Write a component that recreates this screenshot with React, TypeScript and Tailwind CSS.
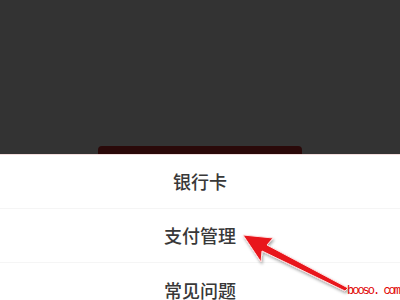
export default function App() {
  const items = ["银行卡", "支付管理", "常见问题"];

  return (
    <div className="relative w-[400px] h-[300px] overflow-hidden bg-[#333333] flex flex-col font-['Noto_Sans_CJK_SC',sans-serif]">
      <div className="h-[146px] shrink-0" />
      {/* button peeking out behind the sheet */}
      <div className="mx-auto w-[204px] h-[8px] shrink-0 rounded-t-[4px] bg-[#2a0909]" />
      <div className="flex-1 bg-white border-t border-[#f3dede]">
        {items.map((label, i) => (
          <div
            key={label}
            className={`h-[54px] flex items-center justify-center text-[18px] font-medium text-[#383838] ${
              i < items.length - 1 ? "border-b border-[#f5f5f5]" : ""
            }`}
          >
            {label}
          </div>
        ))}
      </div>

      {/* annotation arrow */}
      <svg className="absolute left-0 top-0" width="400" height="300" viewBox="0 0 400 300">
        <defs>
          <filter id="sh" x="-20%" y="-20%" width="140%" height="140%">
            <feDropShadow dx="1" dy="2" stdDeviation="1.5" floodColor="#000" floodOpacity="0.35" />
          </filter>
        </defs>
        <polygon
          points="243,235 273,238 267,245 348,288 345,291 262,251 261,262"
          fill="#e8131a"
          stroke="#ffe0e0"
          strokeWidth="1"
          strokeLinejoin="round"
          filter="url(#sh)"
        />
      </svg>

      <span className="absolute left-[347px] top-[285px] font-['Liberation_Mono',monospace] text-[12px] leading-none tracking-[-2px] text-[#e00000]">
        booso. com
      </span>
    </div>
  );
}
